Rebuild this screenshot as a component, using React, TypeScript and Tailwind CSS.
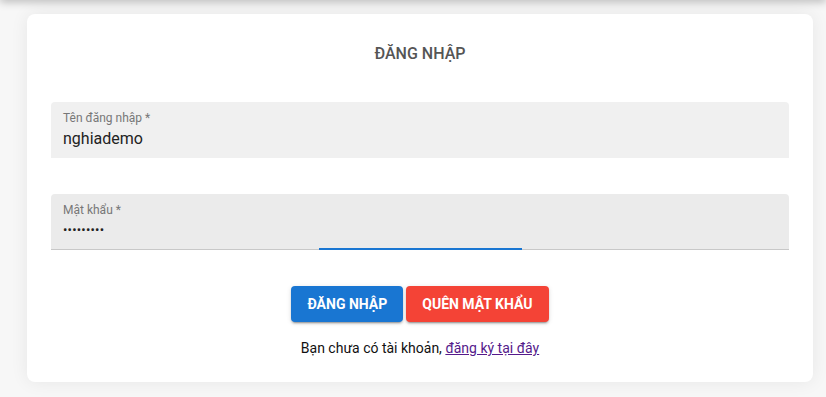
import React from "react";

export default function App() {
  return (
    <div
      className="relative w-[826px] h-[397px] bg-[#f7f7f7] overflow-hidden"
      style={{ fontFamily: "Roboto, 'Noto Sans', sans-serif" }}
    >
      <div className="absolute left-0 right-0 -top-[10px] h-[10px] shadow-[0_2px_8px_rgba(0,0,0,0.25)] bg-white" />
      <div className="pt-[14px] pl-[27px]">
        <div className="w-[786px] h-[368px] bg-white rounded-[8px] shadow-[0_0_18px_rgba(0,0,0,0.07)] px-[24px] pt-[28px]">
          <h1 className="text-center text-[16px] leading-[24px] font-medium text-[#555555]">
            ĐĂNG NHẬP
          </h1>

          <div className="mt-[36px] h-[56px] bg-[#f0f0f0] rounded-t-[4px] px-[12px] pt-[9px]">
            <div className="text-[12px] leading-[14px] text-[#777777]">Tên đăng nhập *</div>
            <div className="mt-[4px] text-[16px] leading-[19px] text-[#222222]">nghiademo</div>
          </div>

          <div className="relative mt-[36px] h-[56px] bg-[#ebebeb] rounded-t-[4px] px-[12px] pt-[9px] border-b border-[#c8c8c8]">
            <div className="text-[12px] leading-[14px] text-[#777777]">Mật khẩu *</div>
            <div className="mt-[3px] text-[13px] leading-[19px] text-[#222222] tracking-[0.2px]">•••••••••</div>
            <div className="absolute left-[268px] w-[203px] -bottom-[1px] h-[2px] bg-[#1976d2]" />
          </div>

          <div className="mt-[36px] flex justify-center gap-[3px]">
            <button className="h-[36px] px-[16px] rounded-[4px] bg-[#1976d2] text-white text-[14px] font-bold shadow-[0_3px_1px_-2px_rgba(0,0,0,0.2),0_2px_2px_0_rgba(0,0,0,0.14),0_1px_5px_0_rgba(0,0,0,0.12)]">
              ĐĂNG NHẬP
            </button>
            <button className="h-[36px] px-[16px] rounded-[4px] bg-[#f44336] text-white text-[14px] font-bold shadow-[0_3px_1px_-2px_rgba(0,0,0,0.2),0_2px_2px_0_rgba(0,0,0,0.14),0_1px_5px_0_rgba(0,0,0,0.12)]">
              QUÊN MẬT KHẨU
            </button>
          </div>

          <p className="mt-[16px] text-center text-[14px] leading-[20px] text-[#111111]">
            Bạn chưa có tài khoản,{" "}
            <a href="#" className="underline text-[#551a8b]">
              đăng ký tại đây
            </a>
          </p>
        </div>
      </div>
    </div>
  );
}
